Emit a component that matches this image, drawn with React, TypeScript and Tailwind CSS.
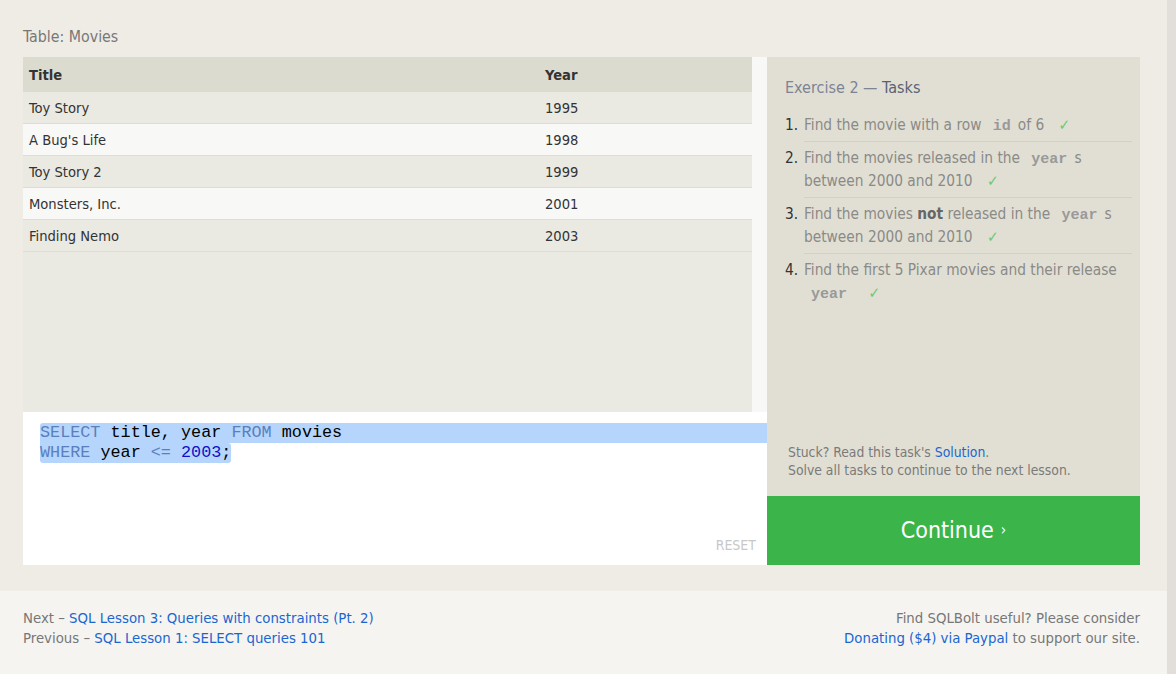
// SQLBolt-style lesson page: table preview, query editor, task list and footer links
const font = "font-['DejaVu_Sans_Condensed','DejaVu_Sans',sans-serif]";
const mono = "font-['Liberation_Mono','Courier_New',monospace]";

const movies = [
  { title: "Toy Story", year: 1995 },
  { title: "A Bug's Life", year: 1998 },
  { title: "Toy Story 2", year: 1999 },
  { title: "Monsters, Inc.", year: 2001 },
  { title: "Finding Nemo", year: 2003 },
];

// Inline code chip used in the task descriptions
function Code({ children }: { children: string }) {
  return (
    <span className={`${mono} px-[7px] text-[15px] leading-none font-bold text-[#999]`}>{children}</span>
  );
}

function Check() {
  return <span className="ml-[10px] text-[#6fc96f]">✓</span>;
}

// Result table with the striped rows and the fake vertical scroll track
function MoviesTable() {
  return (
    <div className="flex h-[355px]">
      <div className="w-[729px] bg-[#eae9e2] text-[14.6px] text-[#333]">
        <div className="flex h-[35px] items-center bg-[#dcdbd0] font-bold">
          <div className="w-[516px] pl-[6px]">Title</div>
          <div className="flex-1 pl-[6px]">Year</div>
        </div>
        {movies.map((m, i) => (
          <div
            key={m.title}
            className={`flex h-[32px] items-center border-b border-[#dedcd4] ${
              i % 2 === 1 ? "bg-[#f8f8f7]" : "bg-[#eae9e2]"
            }`}
          >
            <div className="w-[516px] pl-[6px]">{m.title}</div>
            <div className="flex-1 pl-[6px]">{m.year}</div>
          </div>
        ))}
      </div>
      <div className="w-[15px] bg-[#f8f8f7]" />
    </div>
  );
}

// SQL editor with the selected query
function Editor() {
  return (
    <div className="relative h-[153px] bg-white pt-[11px]">
      <div className={`${mono} text-[16.8px] leading-[20px]`}>
        <div className="ml-[17px] rounded-tl-[3px] bg-[#b5d5fc]">
          <span className="text-[#5a7fbd]">SELECT</span> title, year{" "}
          <span className="text-[#5a7fbd]">FROM</span> movies
        </div>
        <div className="ml-[17px] inline-block rounded-b-[3px] rounded-tr-[3px] bg-[#b5d5fc]">
          <span className="text-[#5a7fbd]">WHERE</span> year{" "}
          <span className="text-[#5a7fbd]">&lt;=</span>{" "}
          <span className="text-[#1010c8]">2003</span>;
        </div>
      </div>
      <div className="absolute right-[11px] bottom-[9px] text-[14px] text-[#c8c8c8]">RESET</div>
    </div>
  );
}

function Tasks() {
  const items = [
    <>
      Find the movie with a row <Code>id</Code>of 6 <Check />
    </>,
    <>
      Find the movies released in the <Code>year</Code>s between 2000 and 2010 <Check />
    </>,
    <>
      Find the movies <b className="text-[#666]">not</b> released in the <Code>year</Code>s between 2000 and 2010{" "}
      <Check />
    </>,
    <>
      Find the first 5 Pixar movies and their release <Code>year</Code> <Check />
    </>,
  ];
  return (
    <div className="flex w-[373px] flex-col bg-[#e1dfd4]">
      <div className="flex-1 pt-[20px] pr-[8px] pl-[18px]">
        <div className="text-[16px] leading-[22px] text-[#7c8494]">
          Exercise 2 — <span className="text-[#596274]">Tasks</span>
        </div>
        <ol className="mt-[15px] text-[15.3px] leading-[23px] text-[#8a8a87]">
          {items.map((it, i) => (
            <li key={i} className="flex">
              <span className="w-[19px] shrink-0 text-[#333]">{i + 1}.</span>
              <div
                className={`flex-1 pb-[4px] ${i < items.length - 1 ? "mb-[5px] border-b border-[#d3d1c6]" : ""}`}
              >
                {it}
              </div>
            </li>
          ))}
        </ol>
      </div>
      <div className="pb-[17px] pl-[21px] text-[13.8px] leading-[18px] text-[#7a7a78]">
        <div>
          Stuck? Read this task's <span className="text-[#1a66d1]">Solution</span>.
        </div>
        <div>Solve all tasks to continue to the next lesson.</div>
      </div>
      <div className="flex h-[69px] items-center justify-center bg-[#3bb54a] text-[23px] text-white">
        Continue <span className="ml-[7px] text-[15px]">›</span>
      </div>
    </div>
  );
}

export default function App() {
  return (
    <div className={`${font} flex h-[674px] w-[1176px] overflow-hidden`}>
      <div className="flex w-[1167px] flex-col">
        <div className="bg-[#efece5] pt-[27px] pr-[27px] pb-[26px] pl-[23px]">
          <div className="mb-[10px] text-[15.8px] leading-[20px] text-[#777]">Table: Movies</div>
          <div className="flex">
            <div className="w-[744px]">
              <MoviesTable />
              <Editor />
            </div>
            <Tasks />
          </div>
        </div>
        <div className="flex flex-1 justify-between bg-[#f5f4f0] pt-[17px] pr-[27px] pl-[23px] text-[14.8px] leading-[20px] text-[#777]">
          <div>
            <div>
              Next – <span className="text-[#1a66d1]">SQL Lesson 3: Queries with constraints (Pt. 2)</span>
            </div>
            <div>
              Previous – <span className="text-[#1a66d1]">SQL Lesson 1: SELECT queries 101</span>
            </div>
          </div>
          <div className="text-right">
            <div>Find SQLBolt useful? Please consider</div>
            <div>
              <span className="text-[#1a66d1]">Donating ($4) via Paypal</span> to support our site.
            </div>
          </div>
        </div>
      </div>
      <div className="w-[9px] bg-[#e2dfdb]" />
    </div>
  );
}
